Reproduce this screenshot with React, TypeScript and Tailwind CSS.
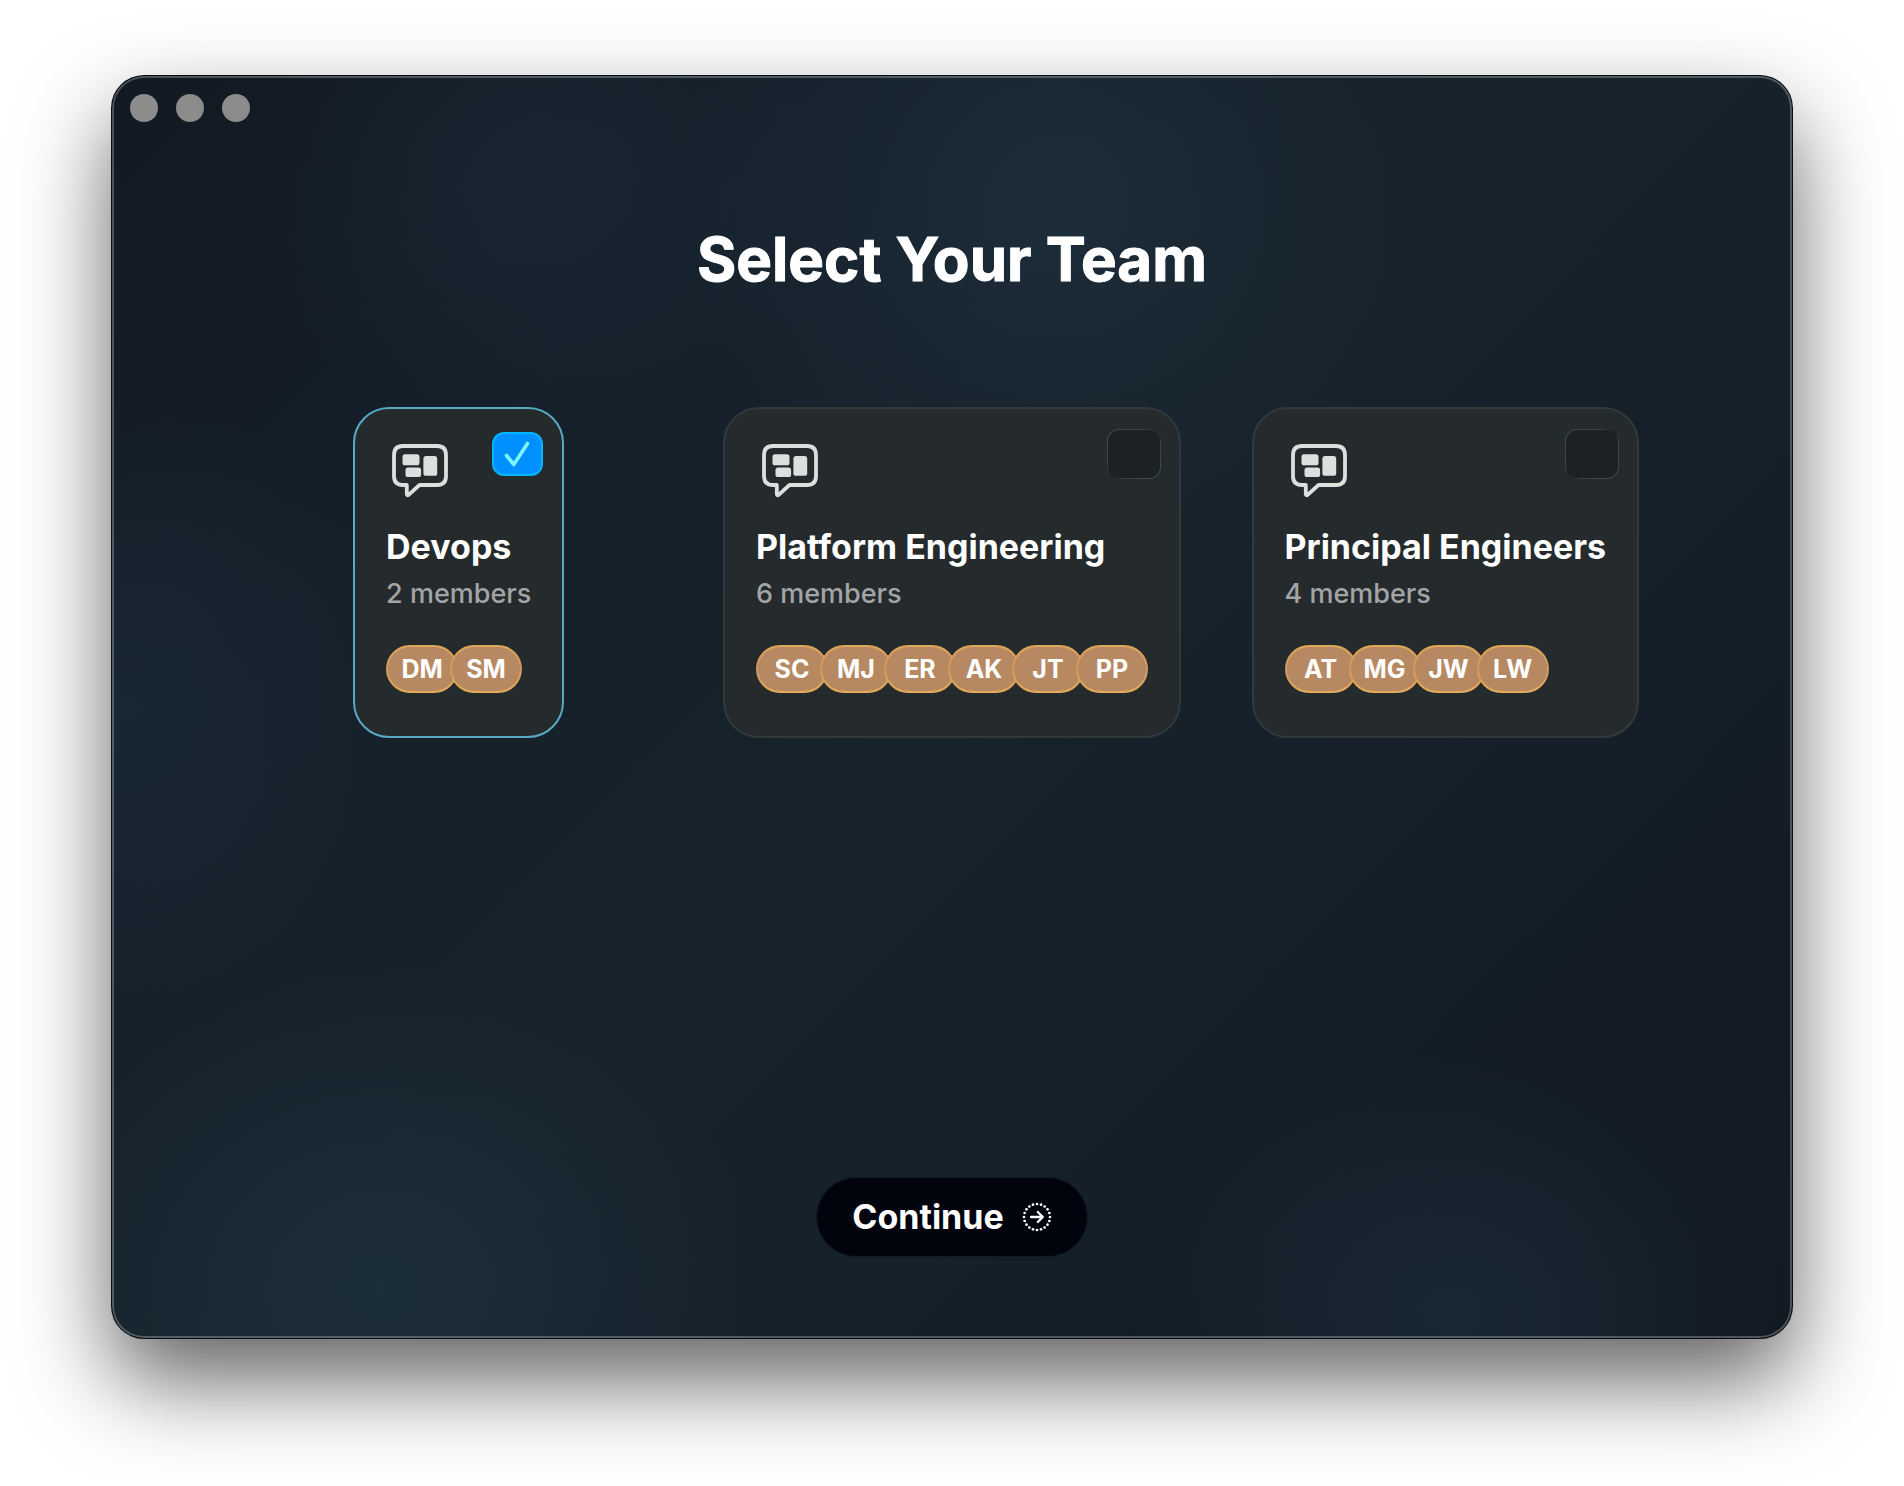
import { useState } from "react";

type Team = { name: string; members: string[] };

const teams: Team[] = [
  { name: "Devops", members: ["DM", "SM"] },
  { name: "Platform Engineering", members: ["SC", "MJ", "ER", "AK", "JT", "PP"] },
  { name: "Principal Engineers", members: ["AT", "MG", "JW", "LW"] },
];

function TeamIcon() {
  return (
    <svg viewBox="0 0 56 54" className="ml-1.5 h-[54px] w-14 text-[#dddfdf]" aria-hidden="true">
      <path
        d="M11 2H45Q54 2 54 11V32Q54 41 45 41H27.5L16.6 50.9Q14.8 52 14.8 49.8V41H11Q2 41 2 32V11Q2 2 11 2Z"
        fill="none"
        stroke="currentColor"
        strokeWidth="3.8"
        strokeLinejoin="round"
      />
      <rect x="10.5" y="10.3" width="17" height="11" rx="2.6" fill="currentColor" />
      <rect x="13.5" y="23.6" width="15.6" height="9.4" rx="2.6" fill="currentColor" />
      <rect x="31.4" y="12" width="13.8" height="19.8" rx="2.6" fill="currentColor" />
    </svg>
  );
}

function ContinueIcon() {
  const dots = Array.from({ length: 20 }, (_, i) => (i * Math.PI) / 10);
  return (
    <svg viewBox="0 0 30 30" className="size-[30px]" aria-hidden="true">
      {dots.map((a) => (
        <circle key={a} cx={15 + 13 * Math.sin(a)} cy={15 - 13 * Math.cos(a)} r="1.35" fill="currentColor" />
      ))}
      <path
        d="M9 15H20.6M15.8 10L20.8 15L15.8 20"
        fill="none"
        stroke="currentColor"
        strokeWidth="2.3"
        strokeLinecap="round"
        strokeLinejoin="round"
      />
    </svg>
  );
}

function TeamCard({ team, selected, onToggle }: { team: Team; selected: boolean; onToggle: () => void }) {
  return (
    <label
      className={`relative flex cursor-pointer flex-col rounded-[36px] border-2 bg-[#252a2d] px-[31px] pt-[35px] pb-[43px] ${
        selected ? "border-[#58a9c4]" : "border-[#31393d]"
      }`}
    >
      <span className="absolute top-5 right-[18px] grid h-[50px] w-[54px] place-items-center">
        <input
          type="checkbox"
          checked={selected}
          onChange={onToggle}
          aria-label={team.name}
          className="col-start-1 row-start-1 h-full w-full cursor-pointer appearance-none rounded-xl border border-transparent [background:linear-gradient(#1d2123,#1d2123)_padding-box,linear-gradient(135deg,#3c4d54_0%,#364348_35%,#1f2426_50%,#364348_65%,#3c4d54_100%)_border-box] checked:h-11 checked:w-[51px] checked:border-2 checked:border-[#00b7ff] checked:[background:#0090ff]"
        />
        {selected && (
          <svg viewBox="0 0 26 26" className="pointer-events-none col-start-1 row-start-1 size-[26px]" aria-hidden="true">
            <path
              d="M2.5 14.5L9.8 23.5L23.5 2.5"
              fill="none"
              stroke="#7df6ff"
              strokeWidth="3.6"
              strokeLinecap="round"
              strokeLinejoin="round"
            />
          </svg>
        )}
      </span>
      <TeamIcon />
      <span className="mt-[27px] text-[34px] leading-11 font-bold whitespace-nowrap text-white">{team.name}</span>
      <span className="mt-[7px] text-[27px] leading-9 font-medium whitespace-nowrap text-[#a2a4a6]">
        {team.members.length} members
      </span>
      <span className="mt-[33px] flex -space-x-2">
        {team.members.map((m) => (
          <span
            key={m}
            className="flex h-12 w-[72px] items-center justify-center rounded-full border-2 border-transparent text-[25px] leading-8 font-bold text-white [background:linear-gradient(#b68963,#b68963)_padding-box,linear-gradient(180deg,#e0a658,#cf9a5c_50%,#e6ac58)_border-box]"
          >
            {m}
          </span>
        ))}
      </span>
    </label>
  );
}

export default function App() {
  const [selected, setSelected] = useState<string[]>(["Devops"]);
  const toggle = (name: string) =>
    setSelected((s) => (s.includes(name) ? s.filter((n) => n !== name) : [...s, name]));

  return (
    <div className="flex min-h-screen flex-col overflow-hidden bg-white px-28 pt-[76px] pb-[148px] font-['Inter',sans-serif]">
      <main className="flex flex-1 flex-col rounded-[32px] bg-[#15202a] bg-[radial-gradient(ellipse_380px_360px_at_56%_10%,#1e2f3dcc,#1e2f3d00),radial-gradient(ellipse_300px_260px_at_25%_8%,#1b2a3799,#1b2a3700),radial-gradient(ellipse_380px_320px_at_16%_96%,#1f3241bb,#1f324100),radial-gradient(ellipse_320px_260px_at_80%_98%,#1b2b37cc,#1b2b3700),radial-gradient(ellipse_260px_320px_at_1%_50%,#1b2b38aa,#1b2b3800),linear-gradient(135deg,#121922_0%,#15202a_25%,#17232b_50%,#15202a_68%,#131c26_85%,#121a23_100%)] shadow-[inset_0_0_0_2px_rgba(255,255,255,0.25),0_0_0_1px_#0a0d10,0_42px_90px_rgba(0,0,0,0.62)]">
        <div className="flex gap-[18px] px-[18px] pt-[18px]">
          <button type="button" aria-label="Close" className="size-7 rounded-full bg-[#8c8c8c]" />
          <button type="button" aria-label="Minimize" className="size-7 rounded-full bg-[#8c8c8c]" />
          <button type="button" aria-label="Zoom" className="size-7 rounded-full bg-[#8c8c8c]" />
        </div>
        <h1 className="mt-[97px] text-center text-[60px] leading-20 font-bold text-white [-webkit-text-stroke:1px_white]">
          Select Your Team
        </h1>
        <div className="mt-[108px] grid grid-cols-3 items-start justify-items-center gap-8 px-[116px]">
          {teams.map((t) => (
            <TeamCard key={t.name} team={t} selected={selected.includes(t.name)} onToggle={() => toggle(t.name)} />
          ))}
        </div>
        <button
          type="button"
          className="mt-auto mb-[81px] flex h-20 cursor-pointer items-center gap-[18px] self-center rounded-full border border-[#0f1728] bg-[#01040c] px-[35px] text-[34px] leading-11 font-bold text-white"
        >
          Continue
          <ContinueIcon />
        </button>
      </main>
    </div>
  );
}
